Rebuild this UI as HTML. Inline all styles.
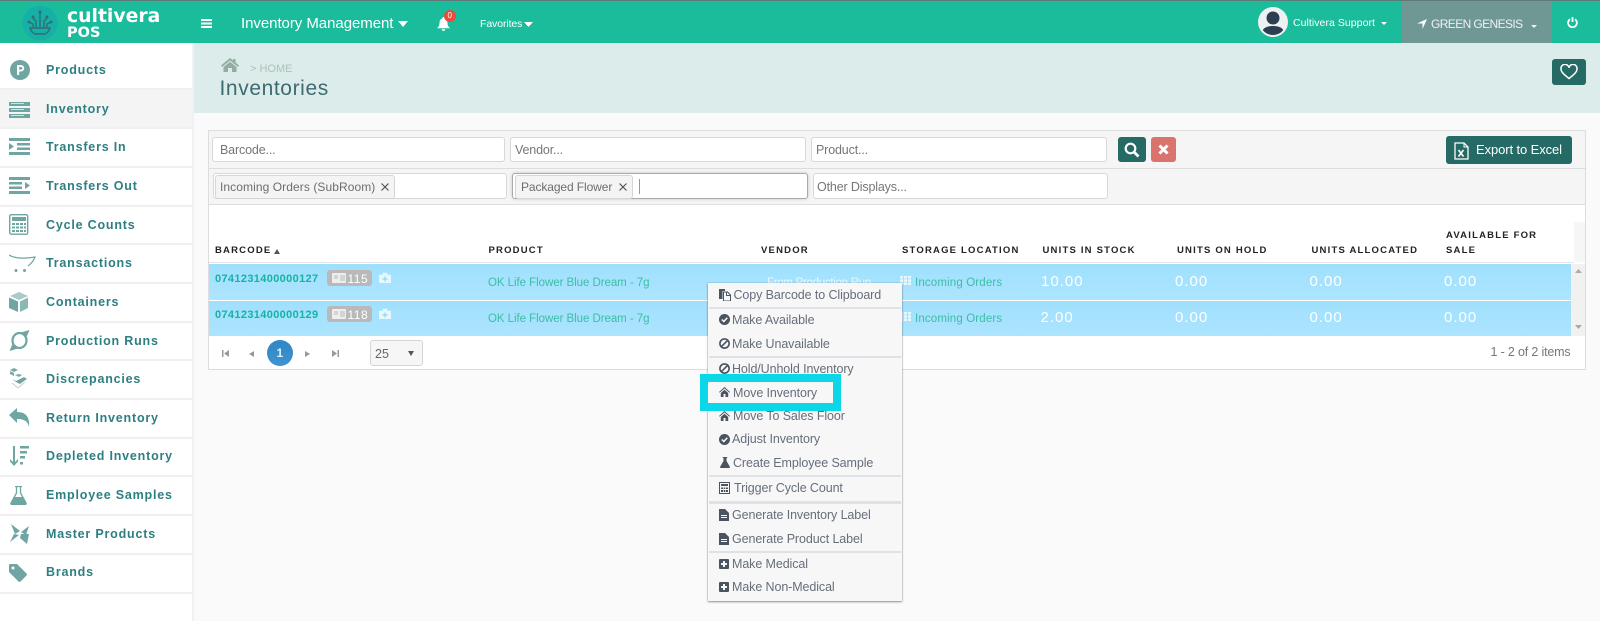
<!DOCTYPE html>
<html><head><meta charset="utf-8"><style>
html,body{margin:0;padding:0}
body{width:1600px;height:621px;overflow:hidden;position:relative;background:#fafafa;font-family:"Liberation Sans",sans-serif}
div,span.t,svg{position:absolute}
.t{white-space:nowrap;line-height:16px;transform:translateY(-50%)}
.s{left:46px;font-weight:bold;font-size:12.5px;letter-spacing:.8px;color:#2d7f82}
.l{left:0;width:192px;height:2px;background:#f0f0f0}
.i{left:5px}
.h{font-weight:bold;font-size:9.5px;letter-spacing:1.2px;color:#222;top:251px}
.v{font-size:15px;letter-spacing:1px;color:#fff}
.b{left:215px;font-weight:bold;font-size:11px;letter-spacing:.35px;color:#14b3a3}
.p{left:488px;font-size:11.5px;letter-spacing:-.05px;color:#3abfa5}
.g{left:915px;font-size:11.5px;letter-spacing:.15px;color:#3abfa5}
.in{background:#fff;border:1px solid #d8d8d8;border-radius:3px;box-sizing:border-box}
.ph{font-size:12.5px;letter-spacing:-.15px;color:#777}
.chip{background:#f4f4f4;border:1px solid #d5d5d5;border-radius:3px;box-sizing:border-box;top:175px;height:24px}
.m{left:732px;font-size:12.5px;letter-spacing:-.1px;color:#666e7a}
.ms{left:709px;width:192px;height:2px;background:#dfe1e6}
.mi{left:718px;fill:#4a5360}
.badge{left:327px;width:45px;height:16px;background:#b9b9b9;border-radius:3px}
.bt{font-size:12px;letter-spacing:.5px;color:#fff;left:347.500px}
</style></head><body>
<!-- top bar -->
<div style="left:0;top:0;width:1600px;height:43px;background:#1abc9c"></div>
<div style="left:0;top:0;width:1600px;height:1px;background:#5c7a76"></div>
<svg style="left:22px;top:5px" width="36" height="36" viewBox="0 0 36 36"><circle cx="18" cy="18" r="17.500" fill="#17b0a8"/><g fill="none" stroke="#2f6f70" stroke-width="1.400"><path d="M8 23h20c-1 4-4 6-6 6h-8c-2 0-5-2-6-6z" /><path d="M18 22V8M14 22v-6l-3-3M22 22v-6l3-3M11 22v-3l-4-2M25 22v-3l4-2"/></g><g fill="#2f6f70"><circle cx="18" cy="7" r="1.500"/><circle cx="11" cy="12" r="1.500"/><circle cx="25" cy="12" r="1.500"/><circle cx="7" cy="17" r="1.500"/><circle cx="29" cy="17" r="1.500"/></g></svg>
<span class="t" style="left:67px;top:16.500px;font-family:'DejaVu Sans',sans-serif;font-weight:bold;font-size:18.800px;color:#fff">cultivera</span>
<span class="t" style="left:67px;top:33px;font-family:'DejaVu Sans',sans-serif;font-weight:bold;font-size:14.500px;color:#fff">POS</span>
<svg style="left:201px;top:19px" width="11" height="9" viewBox="0 0 11 9"><path d="M0 0h11v2H0zM0 3.500h11v2H0zM0 7h11v2H0z" fill="#fff"/></svg>
<span class="t" style="left:241px;top:24px;font-size:15px;letter-spacing:-.05px;color:#fff">Inventory Management</span>
<svg style="left:398px;top:21px" width="10" height="6"><path d="M0 0h10L5 6z" fill="#fff"/></svg>
<svg style="left:437px;top:17px" width="13" height="14" viewBox="0 0 13 14"><path d="M6.500 0a1 1 0 011 1.200C10 2 10.500 4 10.500 6.500c0 2 1 3.500 2.500 4.800H0C1.500 10 2.500 8.500 2.500 6.500 2.500 4 3 2 5.500 1.200A1 1 0 016.500 0zM4.800 12.200h3.400a1.700 1.700 0 01-3.400 0z" fill="#fff"/></svg>
<div style="left:444px;top:10px;width:12px;height:12px;border-radius:50%;background:#e74c3c"></div>
<span class="t" style="left:447.500px;top:16px;font-size:8px;color:#fff">0</span>
<span class="t" style="left:480px;top:24px;font-size:10.500px;letter-spacing:-.1px;color:#fff">Favorites</span>
<svg style="left:524px;top:22px" width="9" height="5"><path d="M0 0h9L4.500 5z" fill="#fff"/></svg>
<svg style="left:1258px;top:7px" width="30" height="30" viewBox="0 0 30 30"><defs><clipPath id="c"><circle cx="15" cy="15" r="13"/></clipPath></defs><circle cx="15" cy="15" r="15" fill="#eef1f1"/><g clip-path="url(#c)"><circle cx="15" cy="11" r="6.500" fill="#2c3e50"/><path d="M3 30c0-8 4-11 12-11s12 3 12 11z" fill="#2c3e50"/></g></svg>
<span class="t" style="left:1293px;top:23px;font-size:10.500px;letter-spacing:.05px;color:#fff">Cultivera Support</span>
<svg style="left:1381px;top:22px" width="6" height="3"><path d="M0 0h6L3 3z" fill="#fff"/></svg>
<div style="left:1402px;top:1px;width:150px;height:42px;background:#6f9895"></div>
<svg style="left:1417px;top:19px" width="10" height="10" viewBox="0 0 10 10"><path d="M10 0L5.500 10V4.500H0z" fill="#fff"/></svg>
<span class="t" style="left:1431px;top:24px;font-size:12px;letter-spacing:-.6px;color:#f0f0f0">GREEN GENESIS</span>
<svg style="left:1531px;top:25px" width="6" height="3"><path d="M0 0h6L3 3z" fill="#f0f0f0"/></svg>
<svg style="left:1567px;top:17px" width="11" height="11" viewBox="0 0 11 11"><path d="M3 2.200a4.400 4.400 0 105 0" fill="none" stroke="#fff" stroke-width="1.800"/><path d="M5.500 0v5" stroke="#fff" stroke-width="1.800"/></svg>

<!-- sidebar -->
<div style="left:0;top:43px;width:192px;height:578px;background:#fff"></div>
<div style="left:192px;top:43px;width:2px;height:578px;background:#eef2f6"></div>
<div style="left:0;top:89px;width:192px;height:38px;background:#f4f4f4"></div>
<div class="l" style="top:88px"></div><div class="l" style="top:127px"></div><div class="l" style="top:166px"></div><div class="l" style="top:205px"></div><div class="l" style="top:243px"></div><div class="l" style="top:282px"></div><div class="l" style="top:321px"></div><div class="l" style="top:359px"></div><div class="l" style="top:398px"></div><div class="l" style="top:437px"></div><div class="l" style="top:475px"></div><div class="l" style="top:514px"></div><div class="l" style="top:553px"></div><div class="l" style="top:592px"></div>

<span class="t s" style="top:70.400px">Products</span>
<span class="t s" style="top:109px">Inventory</span>
<span class="t s" style="top:147px">Transfers In</span>
<span class="t s" style="top:186px">Transfers Out</span>
<span class="t s" style="top:224.500px">Cycle Counts</span>
<span class="t s" style="top:263px">Transactions</span>
<span class="t s" style="top:302px">Containers</span>
<span class="t s" style="top:340.500px">Production Runs</span>
<span class="t s" style="top:379px">Discrepancies</span>
<span class="t s" style="top:417.700px">Return Inventory</span>
<span class="t s" style="top:456px">Depleted Inventory</span>
<span class="t s" style="top:495px">Employee Samples</span>
<span class="t s" style="top:533.700px">Master Products</span>
<span class="t s" style="top:572px">Brands</span>

<svg class="i" style="left:10px;top:60px" width="20" height="20" viewBox="0 0 20 20"><circle cx="10" cy="10" r="10" fill="#6fa6a2"/><path d="M7 15V5h4a3 3 0 010 6.500H9.200V15zM9.200 7v2.600H11a1.300 1.300 0 000-2.600z" fill="#fff"/></svg>
<svg class="i" style="left:9px;top:102px" width="21" height="16" viewBox="0 0 21 16" fill="#6fa6a2"><path d="M0 0h21v4H0zM0 6h21v4H0zM0 12h21v4H0z"/><path d="M2 1h13v1H2zM2 7h13v1H2zM2 13h13v1H2z" fill="#cfe2df"/></svg>
<svg class="i" style="left:9px;top:138px" width="21" height="17" viewBox="0 0 21 17" fill="#6fa6a2"><path d="M0 0h21v3H0zM8 5h13v2.500H8zM8 9.500h13V12H8zM0 14h21v3H0zM0 5v7l5-3.500z"/></svg>
<svg class="i" style="left:9px;top:177px" width="21" height="17" viewBox="0 0 21 17" fill="#6fa6a2"><path d="M0 0h21v3H0zM0 5h13v2.500H0zM0 9.500h13V12H0zM0 14h21v3H0zM16 5v7l5-3.500z"/></svg>
<svg class="i" style="left:9px;top:214px" width="20" height="21" viewBox="0 0 20 21"><rect x=".7" y=".7" width="18" height="19.500" rx="1.500" fill="#fff" stroke="#6fa6a2" stroke-width="1.400"/><path d="M3 3h14v4H3zM3 9h3v2H3zM7 9h3v2H7zM11 9h3v2h-3zM15 9h2v2h-2zM3 12.500h3v2H3zM7 12.500h3v2H7zM11 12.500h3v2h-3zM15 12.500h2v2h-2zM3 16h3v2H3zM7 16h3v2H7zM11 16h3v2h-3zM15 16h2v2h-2z" fill="#6fa6a2"/></svg>
<svg class="i" style="left:9px;top:254px" width="27" height="19" viewBox="0 0 27 19"><path d="M0 1c5 3 14 4 26 2-1 3-4 7-7 9" fill="none" stroke="#6fa6a2" stroke-width="1.200"/><circle cx="7" cy="16.500" r="1.500" fill="#6fa6a2"/><circle cx="15.500" cy="16.500" r="1.500" fill="#6fa6a2"/></svg>
<svg class="i" style="left:9px;top:292px" width="20" height="20" viewBox="0 0 20 20"><path d="M10 0l9 4-9 4-9-4z" fill="#a9cac7"/><path d="M0 5.500l9 4V20l-9-4z" fill="#6fa6a2"/><path d="M11 9.500l8-4V16l-8 4z" fill="#8ab8b4"/></svg>
<svg class="i" style="left:9px;top:330px" width="21" height="21" viewBox="0 0 21 21"><ellipse cx="10.500" cy="10.500" rx="7" ry="7.500" fill="none" stroke="#6fa6a2" stroke-width="2.200"/><path d="M12 2.500L20.500 0 17.500 7zM9 18.500L.5 21 3.500 14z" fill="#6fa6a2"/></svg>
<svg class="i" style="left:9px;top:368px" width="19" height="21" viewBox="0 0 19 21"><path d="M1 2l4-2 4 2-4 2zM1 3v3l4 2V5zM6 7l4-1 3 1-3 2z" fill="#7aa8a4"/><path d="M3 11l4 2 4-2 4-2 3 2-3 2-4 3-4-2z" fill="#6fa6a2"/><path d="M3 15l6 5 7-6" fill="none" stroke="#c9cfd0"/></svg>
<svg class="i" style="left:9px;top:408px" width="21" height="19" viewBox="0 0 21 19"><path d="M0 7L8 0v4c8 0 13 4 12 15-1-5-4-8-12-8v4z" fill="#6fa6a2"/></svg>
<svg class="i" style="left:9px;top:446px" width="21" height="21" viewBox="0 0 21 21" fill="#6fa6a2"><path d="M4 0h2v16l3-3v2.500L5 20l-4-4.500V13l3 3zM11 0h9v2.500h-9zM11 5h7v2.500h-7zM11 10h5v2.500h-5zM11 16h3v2.500h-3z"/></svg>
<svg class="i" style="left:10px;top:486px" width="17" height="19" viewBox="0 0 17 19"><path d="M5 .5h7M6.500 1v6L1 17a1 1 0 001 1.500h13A1 1 0 0016 17L10.500 7V1" fill="none" stroke="#6fa6a2" stroke-width="1.300"/><path d="M4.500 11h8l3.500 6.500-1 1H2l-1-1z" fill="#6fa6a2"/></svg>
<svg class="i" style="left:10px;top:524px" width="19" height="20" viewBox="0 0 19 20" fill="#6fa6a2"><path d="M1 0l9 7-5 3zM19 2l-3 9-5-3zM0 18l4-8 5 1zM17 20l-7-6 1-4 8 0z"/></svg>
<svg class="i" style="left:9px;top:564px" width="18" height="18" viewBox="0 0 18 18"><path d="M0 1.500A1.500 1.500 0 011.500 0H8l9.500 9.500a1.500 1.500 0 010 2l-6 6a1.500 1.500 0 01-2 0L0 8zM4 2.500a1.500 1.500 0 100 3 1.500 1.500 0 000-3z" fill="#6fa6a2" fill-rule="evenodd"/></svg>

<!-- page header -->
<div style="left:194px;top:43px;width:1406px;height:70px;background:#dcecea"></div>
<svg style="left:221px;top:58px" width="18" height="14" viewBox="0 0 18 14"><path d="M9 0l3 2.500V1h2.500v3.500L18 7.500 17 9 9 2.500 1 9 0 7.500zM2.500 9L9 3.800 15.500 9v5H11v-4H7v4H2.500z" fill="#94ada2"/></svg>
<span class="t" style="left:250px;top:69px;font-size:11px;letter-spacing:0;color:#abc2b8">&gt; HOME</span>
<span class="t" style="left:219.500px;top:89px;font-size:21px;letter-spacing:.6px;color:#3d6b70">Inventories</span>
<div style="left:1552px;top:59px;width:34px;height:26px;background:#256a65;border-radius:3px"></div>
<svg style="left:1560px;top:64px" width="18" height="16" viewBox="0 0 18 16"><path d="M9 14.500C4 10.500 1 8 1 5a3.800 3.800 0 018-1.200A3.800 3.800 0 0117 5c0 3-3 5.500-8 9.500z" fill="none" stroke="#fff" stroke-width="1.500"/></svg>

<!-- panel -->
<div style="left:208px;top:130px;width:1378px;height:240px;background:#fff;border:1px solid #ddd;box-sizing:border-box"></div>
<div style="left:209px;top:131px;width:1376px;height:37px;background:#f5f5f5;border-bottom:1px solid #ddd"></div>
<div style="left:209px;top:169px;width:1376px;height:35px;background:#f5f5f5;border-bottom:1px solid #ddd"></div>
<div class="in" style="left:212px;top:137px;width:293px;height:25px"></div>
<div class="in" style="left:510px;top:137px;width:296px;height:25px"></div>
<div class="in" style="left:811px;top:137px;width:296px;height:25px"></div>
<span class="t ph" style="left:220px;top:149.500px">Barcode...</span>
<span class="t ph" style="left:515px;top:149.500px">Vendor...</span>
<span class="t ph" style="left:816px;top:149.500px">Product...</span>
<div style="left:1118px;top:137px;width:28px;height:25px;background:#256a65;border-radius:3px"></div>
<svg style="left:1124px;top:142px" width="16" height="16" viewBox="0 0 16 16"><circle cx="6.500" cy="6.500" r="4.800" fill="none" stroke="#fff" stroke-width="2.200"/><path d="M10 10l4.500 4.500" stroke="#fff" stroke-width="2.800"/></svg>
<div style="left:1151px;top:137px;width:25px;height:25px;background:#d9736c;border-radius:3px"></div>
<svg style="left:1158px;top:144px" width="11" height="11" viewBox="0 0 11 11"><path d="M1.500 1.500l8 8M9.500 1.500l-8 8" stroke="#fff" stroke-width="3"/></svg>
<div style="left:1446px;top:136px;width:126px;height:28px;background:#256a65;border-radius:3px"></div>
<svg style="left:1454px;top:142px" width="15" height="18" viewBox="0 0 15 18"><path d="M1 1h9l4 4v12H1z" fill="none" stroke="#fff" stroke-width="1.300"/><path d="M10 1v4h4" fill="none" stroke="#fff"/><path d="M4.500 8l5 6.500M9.500 8l-5 6.500" stroke="#fff" stroke-width="1.600"/></svg>
<span class="t" style="left:1476px;top:150px;font-size:13px;letter-spacing:-.1px;color:#fff">Export to Excel</span>

<div class="in" style="left:213px;top:173px;width:294px;height:26px"></div>
<div class="in" style="left:512px;top:173px;width:296px;height:26px;border-color:#aaa;box-shadow:0 0 3px rgba(0,0,0,.2)"></div>
<div class="in" style="left:813px;top:173px;width:295px;height:26px"></div>
<div class="chip" style="left:215px;width:180px"></div>
<span class="t ph" style="left:220px;top:186.500px;font-size:12px;letter-spacing:.08px;color:#6d6d6d">Incoming Orders (SubRoom)</span>
<svg style="left:381px;top:183px" width="8" height="8"><path d="M.5.500l7 7M7.500.500l-7 7" stroke="#555" stroke-width="1.200"/></svg>
<div class="chip" style="left:515px;width:118px"></div>
<span class="t ph" style="left:521px;top:186.500px;font-size:12px;letter-spacing:-.1px;color:#6d6d6d">Packaged Flower</span>
<svg style="left:619px;top:183px" width="8" height="8"><path d="M.5.500l7 7M7.500.500l-7 7" stroke="#555" stroke-width="1.200"/></svg>
<div style="left:639px;top:179px;width:1px;height:15px;background:#999"></div>
<span class="t ph" style="left:817px;top:186.500px">Other Displays...</span>

<!-- table -->
<div style="left:1574px;top:222px;width:11px;height:40px;background:#f6f6f6"></div>
<span class="t h" style="left:215px">BARCODE</span>
<svg style="left:274px;top:249px" width="6" height="5"><path d="M0 5h6L3 0z" fill="#555"/></svg>
<span class="t h" style="left:488.500px">PRODUCT</span>
<span class="t h" style="left:761px">VENDOR</span>
<span class="t h" style="left:902px">STORAGE LOCATION</span>
<span class="t h" style="left:1042.500px">UNITS IN STOCK</span>
<span class="t h" style="left:1177px">UNITS ON HOLD</span>
<span class="t h" style="left:1311.500px">UNITS ALLOCATED</span>
<span class="t h" style="left:1446px;top:236px">AVAILABLE FOR</span>
<span class="t h" style="left:1446px">SALE</span>
<div style="left:209px;top:262px;width:1365px;height:1px;background:#e4e4e4"></div>
<div style="left:209px;top:264px;width:1362px;height:36px;background:linear-gradient(#9fe0fd,#ade5fe)"></div>
<div style="left:209px;top:301px;width:1362px;height:35px;background:linear-gradient(#a0e0fd,#ace4fe)"></div>
<div style="left:1571px;top:264px;width:14px;height:72px;background:#f1f1f1"></div>
<svg style="left:1575px;top:269px" width="7" height="4"><path d="M0 4h7L3.500 0z" fill="#aaa"/></svg>
<svg style="left:1575px;top:325px" width="7" height="4"><path d="M0 0h7L3.500 4z" fill="#aaa"/></svg>

<span class="t b" style="top:279px">0741231400000127</span>
<div class="badge" style="top:270px"></div>
<svg style="left:332px;top:273px" width="14" height="10"><rect width="14" height="10" rx="1" fill="#eee"/><path d="M8 3h5M8 5h5M8 7h5M2 3h4M2 5h4" stroke="#b9b9b9"/></svg>
<span class="t bt" style="top:279px">115</span>
<svg style="left:379px;top:272px" width="12" height="11"><path d="M0 3h12v8H0zM4 3V1h4v2" fill="#e6f8ff" stroke="#e6f8ff" stroke-width=".6"/><path d="M6 4.500v5M3.500 7h5" stroke="#8fd6f5" stroke-width="1.200"/></svg>
<span class="t p" style="top:283px">OK Life Flower Blue Dream - 7g</span>
<span class="t" style="left:767px;top:282.500px;font-size:11.500px;letter-spacing:-.28px;color:#eaf8ff">From Production Run</span>
<svg style="left:900px;top:276px" width="11" height="9" fill="#e8f8ff"><path d="M0 0h3v2.500H0zM4 0h3v2.500H4zM8 0h3v2.500H8zM0 3.300h3v2.500H0zM4 3.300h3v2.500H4zM8 3.300h3v2.500H8zM0 6.500h3V9H0zM4 6.500h3V9H4zM8 6.500h3V9H8z"/></svg>
<span class="t g" style="top:283px">Incoming Orders</span>
<span class="t v" style="left:1041px;top:281.500px">10.00</span>
<span class="t v" style="left:1175px;top:281.500px">0.00</span>
<span class="t v" style="left:1309.500px;top:281.500px">0.00</span>
<span class="t v" style="left:1444px;top:281.500px">0.00</span>

<span class="t b" style="top:315px">0741231400000129</span>
<div class="badge" style="top:306px"></div>
<svg style="left:332px;top:309px" width="14" height="10"><rect width="14" height="10" rx="1" fill="#eee"/><path d="M8 3h5M8 5h5M8 7h5M2 3h4M2 5h4" stroke="#b9b9b9"/></svg>
<span class="t bt" style="top:315px">118</span>
<svg style="left:379px;top:308px" width="12" height="11"><path d="M0 3h12v8H0zM4 3V1h4v2" fill="#e6f8ff" stroke="#e6f8ff" stroke-width=".6"/><path d="M6 4.500v5M3.500 7h5" stroke="#8fd6f5" stroke-width="1.200"/></svg>
<span class="t p" style="top:319px">OK Life Flower Blue Dream - 7g</span>
<svg style="left:900px;top:312px" width="11" height="9" fill="#e8f8ff"><path d="M0 0h3v2.500H0zM4 0h3v2.500H4zM8 0h3v2.500H8zM0 3.300h3v2.500H0zM4 3.300h3v2.500H4zM8 3.300h3v2.500H8zM0 6.500h3V9H0zM4 6.500h3V9H4zM8 6.500h3V9H8z"/></svg>
<span class="t g" style="top:319px">Incoming Orders</span>
<span class="t v" style="left:1040.500px;top:317.500px">2.00</span>
<span class="t v" style="left:1175px;top:317.500px">0.00</span>
<span class="t v" style="left:1309.500px;top:317.500px">0.00</span>
<span class="t v" style="left:1444px;top:317.500px">0.00</span>

<!-- pager -->
<svg style="left:222px;top:350px" width="7" height="7" fill="#999"><path d="M0 0h1.500v7H0zM7 0v7L2 3.500z"/></svg>
<svg style="left:249px;top:350.500px" width="5" height="6" fill="#999"><path d="M5 0v6L0 3z"/></svg>
<div style="left:267px;top:340px;width:26px;height:26px;border-radius:50%;background:linear-gradient(#2f86c6,#3f93cf)"></div>
<span class="t" style="left:276.500px;top:353px;font-size:12px;font-weight:bold;color:#dceefa">1</span>
<svg style="left:305px;top:350.500px" width="5" height="6" fill="#999"><path d="M0 0v6l5-3z"/></svg>
<svg style="left:332px;top:350px" width="7" height="7" fill="#999"><path d="M7 0H5.500v7H7zM0 0v7l5-3.500z"/></svg>
<div style="left:370px;top:340px;width:53px;height:26px;background:#f6f6f6;border:1px solid #d5d5d5;border-radius:3px;box-sizing:border-box"></div>
<span class="t" style="left:375px;top:354px;font-size:12.500px;color:#666">25</span>
<svg style="left:408px;top:351px" width="6" height="5" fill="#555"><path d="M0 0h6L3 5z"/></svg>
<span class="t" style="right:29.500px;top:352px;font-size:12.500px;letter-spacing:-.17px;color:#777">1 - 2 of 2 items</span>

<!-- context menu -->
<div style="left:708px;top:283px;width:194px;height:318px;background:#f7f7f8;box-shadow:0 1px 2px rgba(0,0,0,.4),0 0 1px rgba(0,0,0,.3)"></div>
<div class="ms" style="top:307px"></div>
<div class="ms" style="top:356px"></div>
<div class="ms" style="top:475px"></div>
<div class="ms" style="top:501px;height:3px"></div>
<div class="ms" style="top:551px"></div>
<div style="left:700px;top:374px;width:125px;height:21px;border:8px solid #0cd7e8;background:#f7f7f8"></div>

<svg class="mi" style="left:719px;top:289px" width="12" height="12" viewBox="0 0 12 12"><path d="M0 0h6v2H3.500v8H0z"/><path d="M4.500 3h4l3 3v6h-7z" fill="#f7f7f8" stroke="#4a5360"/><path d="M7.500 3v3.500h4" fill="none" stroke="#4a5360"/></svg>
<span class="t m" style="left:733.500px;top:295px">Copy Barcode to Clipboard</span>

<svg class="mi" style="left:719px;top:314px" width="11" height="11" viewBox="0 0 11 11"><circle cx="5.500" cy="5.500" r="5.500"/><path d="M2.800 5.500l2 2 3.500-3.800" fill="none" stroke="#f7f7f8" stroke-width="1.500"/></svg>
<span class="t m" style="top:320px">Make Available</span>
<svg class="mi" style="left:719px;top:338px" width="11" height="11" viewBox="0 0 11 11"><circle cx="5.500" cy="5.500" r="4.600" fill="none" stroke="#4a5360" stroke-width="1.600"/><path d="M2.300 8.700l6.400-6.400" stroke="#4a5360" stroke-width="1.600"/></svg>
<span class="t m" style="top:343.500px">Make Unavailable</span>
<svg class="mi" style="left:719px;top:363px" width="11" height="11" viewBox="0 0 11 11"><circle cx="5.500" cy="5.500" r="4.600" fill="none" stroke="#4a5360" stroke-width="1.600"/><path d="M2.300 8.700l6.400-6.400" stroke="#4a5360" stroke-width="1.600"/></svg>
<span class="t m" style="top:369px">Hold/Unhold Inventory</span>
<svg class="mi" style="left:719px;top:387px" width="11" height="10" viewBox="0 0 11 10"><path d="M5.500 0L11 5l-.7.600-4.800-4.200L.7 5.600 0 5zM1.800 6l3.700-3.200L9.200 6v4H6.500V7h-2v3H1.800z"/></svg>
<span class="t m" style="left:733px;top:392.500px">Move Inventory</span>
<svg class="mi" style="left:719px;top:411px" width="11" height="10" viewBox="0 0 11 10"><path d="M5.500 0L11 5l-.7.600-4.800-4.200L.7 5.600 0 5zM1.800 6l3.700-3.200L9.200 6v4H6.500V7h-2v3H1.800z"/></svg>
<span class="t m" style="left:733px;top:416px">Move To Sales Floor</span>
<svg class="mi" style="left:719px;top:434px" width="11" height="11" viewBox="0 0 11 11"><circle cx="5.500" cy="5.500" r="5.500"/><path d="M2.800 5.500l2 2 3.500-3.800" fill="none" stroke="#f7f7f8" stroke-width="1.500"/></svg>
<span class="t m" style="top:439.300px">Adjust Inventory</span>
<svg class="mi" style="left:720px;top:457px" width="10" height="11" viewBox="0 0 10 11"><path d="M2.800 0h4.400v1H6.500v3L10 10l-.5 1H.5L0 10l3.500-6V1h-.7z"/></svg>
<span class="t m" style="left:733px;top:462.700px">Create Employee Sample</span>
<svg class="mi" style="left:719px;top:482px" width="11" height="12" viewBox="0 0 11 12"><rect x=".5" y=".5" width="10" height="11" fill="none" stroke="#4a5360"/><path d="M2 2h7v2H2zM2 5.500h2v1.500H2zM4.700 5.500h1.600v1.500H4.700zM7 5.500h2v1.500H7zM2 8h2v2H2zM4.700 8h1.600v2H4.700zM7 8h2v2H7z"/></svg>
<span class="t m" style="left:734px;top:488px">Trigger Cycle Count</span>
<svg class="mi" style="left:719px;top:509px" width="10" height="12" viewBox="0 0 10 12"><path d="M0 0h6l4 4v8H0zM2 6v1h6V6zM2 8v1h6V8z" fill-rule="evenodd"/></svg>
<span class="t m" style="top:515px">Generate Inventory Label</span>
<svg class="mi" style="left:719px;top:533px" width="10" height="12" viewBox="0 0 10 12"><path d="M0 0h6l4 4v8H0zM2 6v1h6V6zM2 8v1h6V8z" fill-rule="evenodd"/></svg>
<span class="t m" style="top:538.700px">Generate Product Label</span>
<svg class="mi" style="left:719px;top:559px" width="10" height="10" viewBox="0 0 10 10"><path d="M1 0h8a1 1 0 011 1v8a1 1 0 01-1 1H1a1 1 0 01-1-1V1a1 1 0 011-1zM4 2v2H2v2h2v2h2V6h2V4H6V2z" fill-rule="evenodd"/></svg>
<span class="t m" style="top:564px">Make Medical</span>
<svg class="mi" style="left:719px;top:582px" width="10" height="10" viewBox="0 0 10 10"><path d="M1 0h8a1 1 0 011 1v8a1 1 0 01-1 1H1a1 1 0 01-1-1V1a1 1 0 011-1zM4 2v2H2v2h2v2h2V6h2V4H6V2z" fill-rule="evenodd"/></svg>
<span class="t m" style="top:587px">Make Non-Medical</span>
</body></html>
